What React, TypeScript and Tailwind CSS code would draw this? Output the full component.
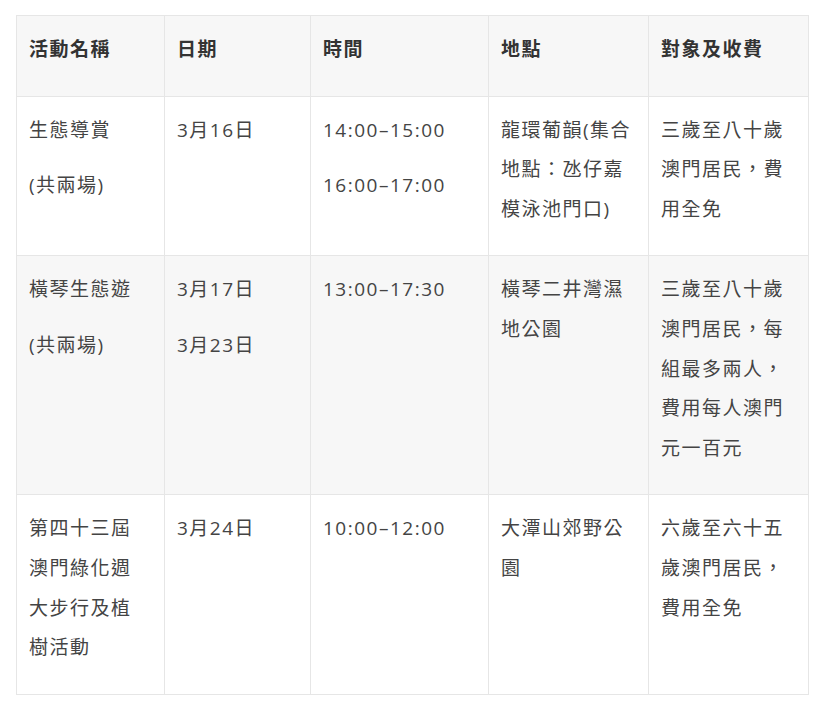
const headers = ['活動名稱', '日期', '時間', '地點', '對象及收費'];

// each cell: list of paragraphs, each paragraph a list of lines
const rows: string[][][][] = [
  [
    [['生態導賞'], ['(共兩場)']],
    [['3月16日']],
    [['14:00–15:00'], ['16:00–17:00']],
    [['龍環葡韻(集合', '地點：氹仔嘉', '模泳池門口)']],
    [['三歲至八十歲', '澳門居民，費', '用全免']],
  ],
  [
    [['橫琴生態遊'], ['(共兩場)']],
    [['3月17日'], ['3月23日']],
    [['13:00–17:30']],
    [['橫琴二井灣濕', '地公園']],
    [['三歲至八十歲', '澳門居民，每', '組最多兩人，', '費用每人澳門', '元一百元']],
  ],
  [
    [['第四十三屆', '澳門綠化週', '大步行及植', '樹活動']],
    [['3月24日']],
    [['10:00–12:00']],
    [['大潭山郊野公', '園']],
    [['六歲至六十五', '歲澳門居民，', '費用全免']],
  ],
];

const widths = ['w-[148px]', 'w-[146px]', 'w-[178px]', 'w-[160px]', 'w-[160px]'];

function Cell({ paras }: { paras: string[][] }) {
  return (
    <td className="border border-[#e6e6e6] align-top pl-3 pr-2 pt-[14px] pb-[10px]">
      {paras.map((lines, i) => (
        <p key={i} className="mb-4 whitespace-nowrap">
          {lines.map((l, j) => (
            <span key={j} className="block">
              {l}
            </span>
          ))}
        </p>
      ))}
    </td>
  );
}

export default function App() {
  return (
    <div
      className="w-[827px] h-[708px] bg-white pt-[15px] pl-4 text-[19px] leading-[39.6px] tracking-[1.5px] text-[#444]"
      style={{ fontFamily: '"Open Sans", "Noto Sans CJK TC", sans-serif' }}
    >
      <table className="border-collapse table-fixed w-[792px]">
        <colgroup>
          {widths.map((w, i) => (
            <col key={i} className={w} />
          ))}
        </colgroup>
        <thead>
          <tr className="bg-[#f7f7f7]">
            {headers.map((h) => (
              <th
                key={h}
                className="border border-[#e6e6e6] align-top text-left font-bold text-[#333] pl-3 pr-2 pt-[14px] pb-[10px]"
              >
                <p className="mb-4">{h}</p>
              </th>
            ))}
          </tr>
        </thead>
        <tbody>
          {rows.map((row, i) => (
            <tr key={i} className={i === 1 ? 'bg-[#f7f7f7]' : 'bg-white'}>
              {row.map((paras, j) => (
                <Cell key={j} paras={paras} />
              ))}
            </tr>
          ))}
        </tbody>
      </table>
    </div>
  );
}
